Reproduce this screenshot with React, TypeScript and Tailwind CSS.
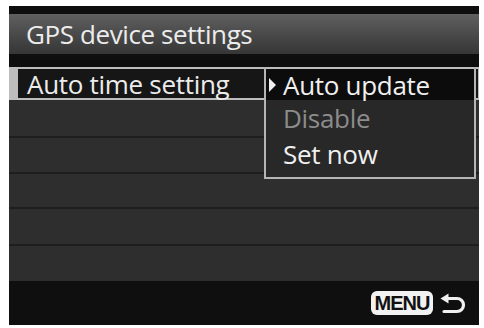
import React from "react";

const font = { fontFamily: '"Open Sans", "Noto Sans", sans-serif' };

function ReturnIcon() {
  return (
    <svg width="26" height="21" viewBox="0 0 26 21" fill="none">
      <path d="M7 5.5 H17 a6.5 6.5 0 0 1 0 13 H4" stroke="#f0f0f0" strokeWidth="3.2" strokeLinecap="round" fill="none" />
      <path d="M0.5 5.5 L8.5 0.5 L8.5 10.5 Z" fill="#f0f0f0" />
    </svg>
  );
}

export default function App() {
  return (
    <div className="w-[484px] h-[328px] bg-white pt-[6px] pl-[9px]" style={font}>
      <div className="relative w-[470px] h-[319px] bg-[#0e0e0e] flex flex-col">
        <div className="h-[8px]" />
        <div className="h-[40px] bg-gradient-to-b from-[#606060] via-[#4a4a4a] to-[#363636] flex items-center pl-[17px]">
          <span className="text-[26px] font-medium leading-none text-[#ececec] tracking-[-0.4px]">GPS device settings</span>
        </div>
        <div className="h-[13px]" />
        <div className="h-[33px] flex bg-[#bdbdbd] py-[2px] pr-[1px]">
          <div className="w-[9px]" />
          <div className="flex-1 bg-[#161616] flex items-center pl-[9px]">
            <span className="text-[26px] font-medium leading-none text-[#ececec] tracking-[-0.3px]">Auto time setting</span>
          </div>
        </div>
        <div className="flex-1 flex flex-col bg-[#2e2e2e]">
          <div className="h-[38px] border-b-2 border-[#1e1e1e]" />
          <div className="h-[36px] border-b-2 border-[#1e1e1e]" />
          <div className="h-[35px] border-b-2 border-[#1e1e1e]" />
          <div className="h-[37px] border-b-2 border-[#1e1e1e]" />
          <div className="flex-1" />
        </div>
        <div className="h-[44px] bg-[#0f0f0f] flex items-center justify-end pr-[13px] gap-[7px]">
          <div className="h-[24px] w-[62px] rounded-[6px] bg-[#f2f2f2] flex items-center justify-center">
            <span className="text-[20px] font-bold leading-none text-[#111] tracking-[-1px]" style={{ fontFamily: '"Liberation Sans", Arial, sans-serif' }}>MENU</span>
          </div>
          <ReturnIcon />
        </div>

        <div className="absolute left-[255px] top-[61px] w-[212px] h-[112px] border-2 border-[#b5b5b5] border-t-0 bg-[#282828] flex flex-col">
          <div className="h-[33px] bg-[#0c0c0c] border-t-2 border-[#bdbdbd] flex items-center pl-[2px]">
            <svg width="9" height="16" viewBox="0 0 9 16"><path d="M1 1 L8 8 L1 15 Z" fill="#f0f0f0" /></svg>
            <span className="ml-[6px] text-[26px] font-medium leading-none text-[#f0f0f0] tracking-[-0.3px]">Auto update</span>
          </div>
          <div className="h-[36px] flex items-center pl-[17px]">
            <span className="text-[26px] font-medium leading-none text-[#8c8c8c] tracking-[-0.3px]">Disable</span>
          </div>
          <div className="h-[35px] flex items-center pl-[17px]">
            <span className="text-[26px] font-medium leading-none text-[#f0f0f0] tracking-[-0.3px]">Set now</span>
          </div>
        </div>
      </div>
    </div>
  );
}
